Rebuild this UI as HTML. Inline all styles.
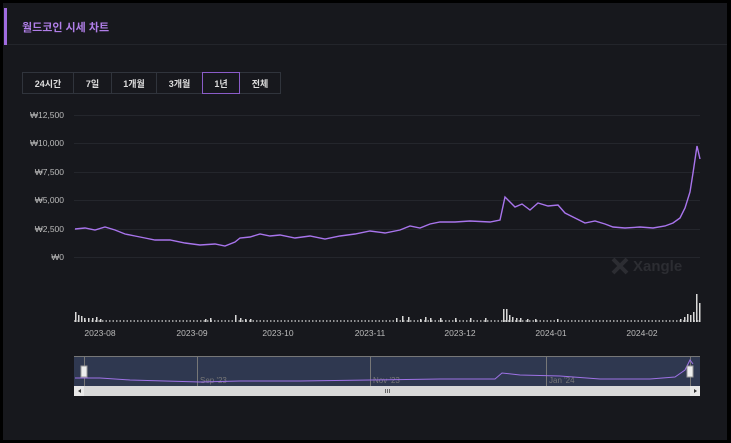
<!DOCTYPE html>
<html><head><meta charset="utf-8"><style>
html,body{margin:0;padding:0;background:#000;width:731px;height:443px;overflow:hidden;font-family:"Liberation Sans","Noto Sans CJK KR",sans-serif}
.panel{position:absolute;left:3px;top:3px;width:724px;height:437px;background:#17181d}
.strip{position:absolute;left:4px;top:8px;width:3px;height:37px;background:#a06be0}
.title{position:absolute;left:22px;top:19px;color:#b07ee8;font-size:11px;font-weight:bold}
.hline{position:absolute;left:7px;top:44px;width:720px;height:1px;background:#23252b}
.btns{position:absolute;left:22px;top:72px;display:flex;height:22px}
.btns div{border:1px solid #30343c;margin-left:-1px;color:#ddd;font-size:9px;font-weight:bold;display:flex;align-items:center;justify-content:center;box-sizing:border-box;height:22px}
.btns .on{border:1px solid #8a5cc8;position:relative;z-index:1}
</style></head><body>
<div class="panel"></div>
<div class="strip"></div>
<div class="title">월드코인 시세 차트</div>
<div class="hline"></div>
<div class="btns">
<div style="width:52px;margin-left:0">24시간</div><div style="width:39px">7일</div><div style="width:46px">1개월</div><div style="width:47px">3개월</div><div class="on" style="width:38px">1년</div><div style="width:42px">전체</div>
</div>
<svg width="731" height="443" style="position:absolute;left:0;top:0" font-family="Liberation Sans, sans-serif">
<g stroke="#24262c" stroke-width="1">
<line x1="74" y1="115.5" x2="700" y2="115.5"/><line x1="74" y1="143.5" x2="700" y2="143.5"/>
<line x1="74" y1="172.5" x2="700" y2="172.5"/><line x1="74" y1="200.5" x2="700" y2="200.5"/>
<line x1="74" y1="229.5" x2="700" y2="229.5"/><line x1="74" y1="257.5" x2="700" y2="257.5"/>
</g>
<g fill="#bbb" font-size="8.5" text-anchor="end">
<text x="64" y="118">₩12,500</text><text x="64" y="146">₩10,000</text><text x="64" y="175">₩7,500</text>
<text x="64" y="203">₩5,000</text><text x="64" y="232">₩2,500</text><text x="64" y="260">₩0</text>
</g>
<g fill="#2c2d32" font-size="15" font-weight="bold"><text x="633" y="271">Xangle</text>
<path d="M613 259l14 14M627 259l-14 14" stroke="#2c2d32" stroke-width="4"/></g>
<polyline fill="none" stroke="#a874ec" stroke-width="1.4" points="75,229 85,228 95,230 105,227 115,230 125,234 135,236 145,238 155,240 170,240 185,243 200,245 215,244 225,246 235,242 240,238 250,237 260,234 270,236 280,235 295,238 310,236 325,239 340,236 355,234 370,231 385,233 400,230 410,226 420,228 430,224 440,222 455,222 470,221 490,222 500,220 505,197 515,207 522,204 530,210 538,203 548,206 558,205 565,213 575,218 585,223 595,221 605,224 613,227 625,228 640,227 653,228 665,226 673,223 680,218 685,208 690,192 693,173 697,146 700,159"/>
<line x1="74" y1="321" x2="700" y2="321" stroke="#bbb" stroke-width="1.5" stroke-dasharray="1.5,2"/>
<g fill="#d8d8d8" stroke="none">
<rect x="75" y="312" width="1.5" height="10"/><rect x="78" y="315" width="1.5" height="7"/><rect x="81" y="316" width="1.5" height="6"/>
<rect x="84" y="318" width="1.5" height="4"/><rect x="88" y="318" width="1.5" height="4"/><rect x="92" y="318" width="1.5" height="4"/>
<rect x="96" y="317" width="1.5" height="5"/><rect x="100" y="319" width="1.5" height="3"/><rect x="235" y="315" width="1.5" height="7"/>
<rect x="240" y="318" width="1.5" height="4"/><rect x="245" y="319" width="1.5" height="3"/><rect x="250" y="319" width="1.5" height="3"/>
<rect x="205" y="319" width="1.5" height="3"/><rect x="210" y="318" width="1.5" height="4"/><rect x="396" y="318" width="1.5" height="4"/>
<rect x="402" y="316" width="1.5" height="6"/><rect x="408" y="317" width="1.5" height="5"/><rect x="420" y="319" width="1.5" height="3"/>
<rect x="425" y="317" width="1.5" height="5"/><rect x="430" y="318" width="1.5" height="4"/><rect x="440" y="318" width="1.5" height="4"/>
<rect x="455" y="318" width="1.5" height="4"/><rect x="470" y="318" width="1.5" height="4"/><rect x="485" y="318" width="1.5" height="4"/>
<rect x="503" y="309" width="1.5" height="13"/><rect x="506" y="309" width="1.5" height="13"/><rect x="509" y="315" width="1.5" height="7"/>
<rect x="512" y="317" width="1.5" height="5"/><rect x="516" y="318" width="1.5" height="4"/><rect x="520" y="318" width="1.5" height="4"/>
<rect x="527" y="319" width="1.5" height="3"/><rect x="535" y="319" width="1.5" height="3"/><rect x="557" y="319" width="1.5" height="3"/>
<rect x="680" y="319" width="1.5" height="3"/><rect x="684" y="317" width="1.5" height="5"/><rect x="687" y="314" width="1.5" height="8"/>
<rect x="690" y="315" width="1.5" height="7"/><rect x="693" y="312" width="1.5" height="10"/><rect x="696" y="294" width="1.5" height="28"/>
<rect x="699" y="303" width="1.5" height="19"/>
</g>
<g fill="#bbb" font-size="8.5" text-anchor="middle">
<text x="100" y="336">2023-08</text><text x="192" y="336">2023-09</text><text x="278" y="336">2023-10</text>
<text x="370" y="336">2023-11</text><text x="460" y="336">2023-12</text><text x="551" y="336">2024-01</text><text x="642" y="336">2024-02</text>
</g>
<rect x="74" y="356" width="626" height="30" fill="#2f3850"/>
<line x1="74" y1="356.5" x2="700" y2="356.5" stroke="#777"/>
<g stroke="#777"><line x1="197.5" y1="356" x2="197.5" y2="386"/><line x1="370.5" y1="356" x2="370.5" y2="386"/><line x1="546.5" y1="356" x2="546.5" y2="386"/><line x1="84.5" y1="356" x2="84.5" y2="386"/><line x1="690.5" y1="356" x2="690.5" y2="386"/></g>
<g fill="#777" font-size="8"><text x="200" y="383">Sep '23</text><text x="373" y="383">Nov '23</text><text x="549" y="383">Jan '24</text></g>
<polyline fill="none" stroke="#9e72e6" stroke-width="1" points="75,378 100,378 130,380 200,382 240,381 300,381 370,380 440,379 495,379 502,373 520,375 560,376 600,379 650,379 675,377 685,370 690,360 693,364"/>
<rect x="81" y="366" width="6" height="11" fill="#eee" stroke="#999"/>
<rect x="687" y="366" width="6" height="11" fill="#eee" stroke="#999"/>
<rect x="74" y="386" width="626" height="10" fill="#d8d8d8"/>
<rect x="74" y="386" width="10" height="10" fill="#e8e8e8"/><rect x="690" y="386" width="10" height="10" fill="#e8e8e8"/>
<path d="M78 391l3-2v4z" fill="#333"/><path d="M697 391l-3-2v4z" fill="#333"/>
<g stroke="#666"><line x1="385.5" y1="389" x2="385.5" y2="393"/><line x1="387.5" y1="389" x2="387.5" y2="393"/><line x1="389.5" y1="389" x2="389.5" y2="393"/></g>
</svg>
</body></html>
